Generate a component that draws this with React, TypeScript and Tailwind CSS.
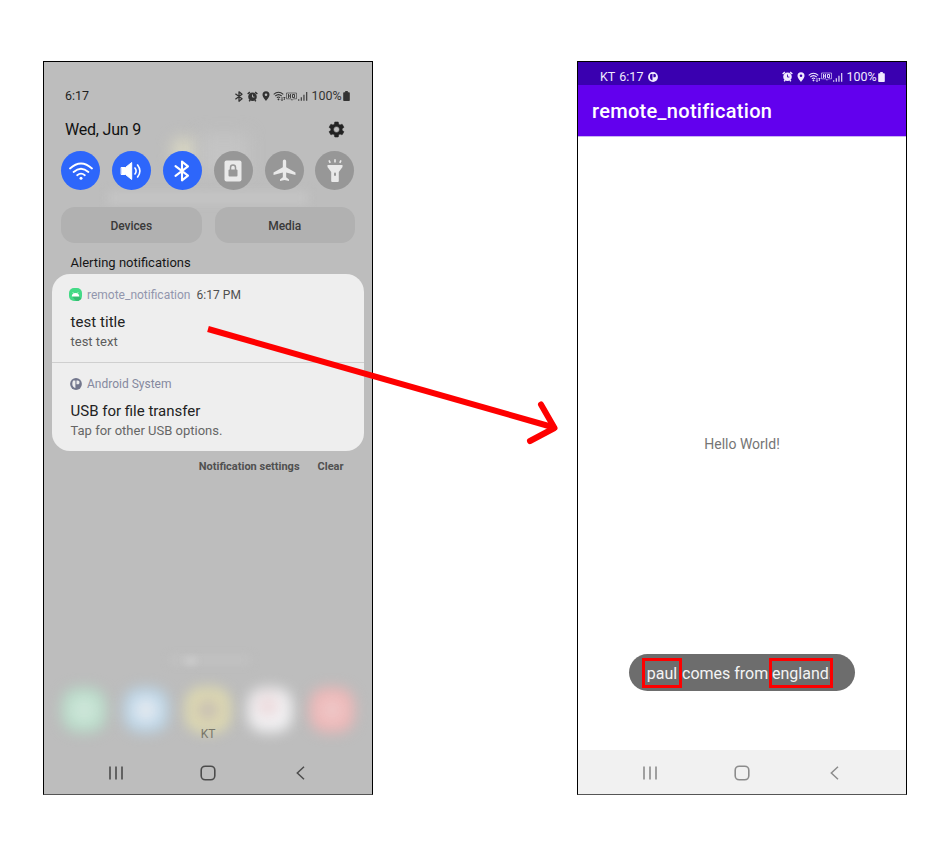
import React from "react";

type IconProps = { className?: string };

const BluetoothRune = ({ className }: IconProps) => (
  <svg viewBox="0 0 16 22" className={className} fill="none" stroke="currentColor" strokeWidth="2.1" strokeLinejoin="round" strokeLinecap="round">
    <path d="M1.5 6.2 14 15.6 8 20.4V1.6l6 4.8L1.5 15.8" />
  </svg>
);

const PlatformIcon = ({ className, hole }: IconProps & { hole: string }) => (
  <svg viewBox="0 0 12 12" className={className}>
    <circle cx="6" cy="6" r="5.9" fill="currentColor" />
    <path d="M3.200 2.500h2.200v7.500C3.400 9.600 2.300 8 2.300 6q0-2.300.9-3.500z M6.500 2.500h1.300c1 0 1.700.7 1.700 1.900s-.7 1.900-1.700 1.900H6.500z" fill={hole} />
  </svg>
);

const StatusIcons = ({ bluetooth, bg }: { bluetooth?: boolean; bg: string }) => (
  <div className="flex h-4 items-center">
    {bluetooth && <BluetoothRune className="mr-[4px] h-[11px] w-[8px] [&>path]:stroke-[2.6]" />}
    <svg viewBox="0 0 10 10" className="mr-[4px] h-[11px] w-[11px]">
      <circle cx="5" cy="5.300" r="3.900" fill="currentColor" />
      <path d="M.6 2.800 2.600 1M9.400 2.800 7.400 1M1.900 9.300l1-1M8.100 9.300l-1-1" stroke="currentColor" strokeWidth="1.300" />
      <path d="M5 3.200v2.300h1.700" stroke={bg} strokeWidth=".8" fill="none" />
    </svg>
    <svg viewBox="0 0 8 10" className="mr-[3px] h-[10px] w-[8px]">
      <path fillRule="evenodd" fill="currentColor" d="M4 .3a3.500 3.500 0 0 0-3.500 3.500C.5 6.200 4 9.900 4 9.900s3.500-3.700 3.500-6.100A3.500 3.500 0 0 0 4 .3zm0 2.200a1.300 1.300 0 1 1 0 2.600 1.300 1.300 0 0 1 0-2.600z" />
    </svg>
    <svg viewBox="0 0 13 10" className="h-[10px] w-[13px]" fill="none" stroke="currentColor">
      <path d="M.7 3.300Q5.500-.9 10.300 3.300M2.300 5Q5.500 2.200 8.700 5M3.900 6.700Q5.500 5.400 7.100 6.700" strokeWidth="1.100" />
      <path d="M5.500 7.300 6.600 8.400l-1.100 1-1.100-1z" fill="currentColor" stroke="none" />
      <path d="M9 6v3.600M8 8.500 9 9.600l1-1.100M11.400 9V6M10.500 7l.9-1 .9 1" strokeWidth=".8" />
    </svg>
    <svg viewBox="0 0 11 9" className="mr-px h-[9px] w-[11px]" fill="none" stroke="currentColor" strokeWidth="1">
      <path d="M.5 1h10v5.800h-3l-1.500 1.500-1-1.500H.5z" strokeWidth=".6" />
      <path d="M2.500 2v4M2.500 4h2M4.500 2v4M6.500 2.500v3h2v-3z" strokeWidth=".9" />
    </svg>
    <svg viewBox="0 0 10 10" className="mr-[4px] h-[10px] w-[10px]" fill="currentColor">
      <path d="M0 8.200h1.300v1.500H0zM2.700 6.300H4v3.400H2.700zM5.300 3.800h1.300v5.900H5.300zM8 1h1.300v8.700H8z" opacity=".85" />
    </svg>
    <span className="w-[30px] text-[12.5px] leading-4 whitespace-nowrap">100%</span>
    <svg viewBox="0 0 7 10" className="ml-[1.500px] h-[10px] w-[7px]" fill="currentColor">
      <path d="M2.200 0h2.600v1.200H6a.8.8 0 0 1 .8.800v7.200a.8.8 0 0 1-.8.800H1a.8.8 0 0 1-.8-.8V2a.8.8 0 0 1 .8-.8h1.200z" />
    </svg>
  </div>
);

const NavBar = ({ className }: IconProps) => (
  <div className={`flex h-[44px] items-center pt-px ${className}`}>
    <svg viewBox="0 0 14 14" className="ml-[65px] h-[14px] w-[14px]" fill="none" stroke="currentColor" strokeWidth="1.600">
      <path d="M1 .5v13M7 .5v13M13 .5v13" />
    </svg>
    <svg viewBox="0 0 16 16" className="ml-[77px] h-4 w-4" fill="none" stroke="currentColor" strokeWidth="1.600">
      <rect x="1.200" y="1.200" width="13.600" height="13.600" rx="4" />
    </svg>
    <svg viewBox="0 0 9 14" className="ml-[80px] h-[14px] w-[9px]" fill="none" stroke="currentColor" strokeWidth="1.500">
      <path d="M8 .7 1.300 7 8 13.300" />
    </svg>
  </div>
);

const Toggle = ({ on, children }: { on?: boolean; children: React.ReactNode }) => (
  <div className={`flex h-[39px] w-[39px] items-center justify-center rounded-full ${on ? "bg-[#2d66fb] text-white" : "bg-[#979797] text-[#e9e9e9]"}`}>
    {children}
  </div>
);

const LeftPhone = () => (
  <div className="relative isolate flex h-[734px] w-[330px] flex-col overflow-hidden border border-black border-b-[#555] bg-[#bdbdbd] text-[#1c1c1c]">
    {/* Blurred home screen behind the shade */}
    <div className="absolute inset-0 -z-10">
      <div className="absolute top-[76px] left-[128px] h-6 w-6 rounded-full bg-[#dcdac4] blur-[8px]" />
      <div className="absolute top-[72px] left-[156px] h-10 w-12 bg-[#c4c4c4] blur-[8px]" />
      <div className="absolute top-[130px] left-[64px] h-3 w-[200px] bg-[#c5c5c5] blur-[5px]" />
      <div className="absolute top-[594px] left-[126px] h-2 w-[80px] bg-[#c2c2c2] blur-[4px]" />
      <div className="absolute top-[595px] left-[141px] h-2 w-3 bg-[#cacaca] blur-[3px]" />
    </div>

    <div className="mt-[26px] flex h-4 items-center justify-between pr-[22px] pl-[21px] text-[#333]">
      <span className="pt-px text-[12.500px] text-[#1f1f1f]">6:17</span>
      <StatusIcons bluetooth bg="#bdbdbd" />
    </div>

    <div className="mt-[15px] flex h-5 items-center justify-between pr-[27px] pl-[21px]">
      <span className="pt-[2px] text-[16px] tracking-[-.2px] text-[#111]">Wed, Jun 9</span>
      <svg viewBox="0 0 24 24" className="h-[19px] w-[19px] -mr-px" fill="#222">
        <path stroke="#222" strokeWidth=".6" strokeLinejoin="round" d="M19.140 12.940c.040-.3.060-.61.060-.94s-.020-.64-.070-.94l2.030-1.580a.49.490 0 0 0 .12-.61l-1.920-3.320a.488.488 0 0 0-.59-.22l-2.390.96a7.030 7.030 0 0 0-1.620-.94l-.36-2.540a.484.484 0 0 0-.48-.41h-3.840a.47.470 0 0 0-.47.410l-.36 2.540c-.59.240-1.130.570-1.620.940l-2.390-.96a.47.470 0 0 0-.59.220L2.740 8.870a.47.470 0 0 0 .12.610l2.030 1.580c-.050.3-.090.630-.090.940s.020.640.070.940l-2.030 1.580a.49.490 0 0 0-.12.610l1.920 3.320c.12.220.370.290.590.220l2.390-.96c.5.380 1.030.7 1.620.940l.36 2.540c.050.240.240.410.480.410h3.840c.24 0 .440-.17.470-.41l.36-2.540c.59-.24 1.130-.56 1.620-.94l2.390.960c.220.080.470 0 .590-.22l1.920-3.320a.47.470 0 0 0-.12-.61zM12 15.700A3.700 3.700 0 1 1 12 8.300a3.700 3.700 0 0 1 0 7.400z" />
      </svg>
    </div>

    <div className="mt-[12px] ml-[17px] flex gap-[11.900px]">
      <Toggle on>
        <svg viewBox="0 0 24 18" className="h-[18px] w-6" fill="none" stroke="currentColor" strokeWidth="1.800" strokeLinecap="round">
          <path d="M1 6.500Q12-3.500 23 6.500M4.600 10Q12 3.400 19.400 10M8.200 13.200Q12 10 15.800 13.200" />
          <circle cx="12" cy="16.300" r="1.500" fill="currentColor" stroke="none" />
        </svg>
      </Toggle>
      <Toggle on>
        <svg viewBox="0 0 24 20" className="h-5 w-6" fill="none" stroke="currentColor" strokeWidth="1.600" strokeLinecap="round">
          <path d="M2.500 6.500h4L12.700 1.500v17L6.500 13.500h-4z" fill="currentColor" strokeWidth="1" strokeLinejoin="round" />
          <path d="M16 7q2.200 3 0 6M18.600 4q4.600 6 0 12" />
        </svg>
      </Toggle>
      <Toggle on>
        <BluetoothRune className="h-[22px] w-4" />
      </Toggle>
      <Toggle>
        <svg viewBox="0 0 18 22" className="h-[22px] w-[18px]">
          <rect x=".5" y=".5" width="17" height="21" rx="2" fill="currentColor" />
          <rect x="4.500" y="9.500" width="9" height="7" rx="1" fill="#979797" />
          <path d="M6.500 10V7.500a2.500 2.500 0 0 1 5 0V10" stroke="#979797" strokeWidth="1.500" fill="none" />
        </svg>
      </Toggle>
      <Toggle>
        <svg viewBox="0 0 22 22" className="h-[23px] w-[23px]" fill="currentColor">
          <path d="M11 .5c-1 0-1.600.9-1.600 2v5.400L.5 13v2.200l8.900-2.400v4.700l-2.700 2v1.600l4.300-1 4.300 1v-1.600l-2.700-2v-4.700l8.900 2.400V13l-8.900-5.100V2.500c0-1.100-.6-2-1.600-2z" />
        </svg>
      </Toggle>
      <Toggle>
        <svg viewBox="0 0 16 24" className="h-6 w-4">
          <path d="M2 1.300l1.200 2.500M8 .3v3.100M14 1.300l-1.200 2.500" stroke="currentColor" strokeWidth="1.600" />
          <path d="M.5 6h15v2L11.800 13v9a1 1 0 0 1-1 1H5.200a1 1 0 0 1-1-1v-9L.5 8z" fill="currentColor" />
          <rect x="7" y="13.500" width="2" height="3.500" rx="1" fill="#979797" />
        </svg>
      </Toggle>
    </div>

    <div className="mt-[17px] ml-[17px] flex gap-[13px] text-[12px] font-medium tracking-[-.05px] text-[#3a3a3a]">
      <div className="flex h-[36px] w-[140.500px] items-center justify-center rounded-[14px] bg-[#b1b1b1] pt-px">Devices</div>
      <div className="flex h-[36px] w-[140.500px] items-center justify-center rounded-[14px] bg-[#b1b1b1] pt-px">Media</div>
    </div>

    <div className="mt-[12px] h-4 pl-[26.500px] text-[13px] leading-4 text-[#161616]">Alerting notifications</div>

    <div className="mt-[2.500px] ml-2 h-[177px] w-[312px] rounded-[18px] bg-[#eee]">
      <div className="h-[89.500px] border-b border-[#cfcfcf] pt-[13px] pl-[18px]">
        <div className="flex h-4 items-center text-[12px]">
          <svg viewBox="0 0 13 13" className="-ml-px h-[13px] w-[13px]">
            <rect width="13" height="13" rx="5" fill="#43da86" />
            <path d="M3 8.300h7l2.500 2.500-3 2.200H7z" fill="#35bd72" />
            <path d="M2.800 8.500a3.700 3.500 0 0 1 7.400 0z" fill="#fff" />
            <path d="M3.800 4.200l1 1.500M9.200 4.200l-1 1.500" stroke="#fff" strokeWidth=".6" />
          </svg>
          <span className="ml-[5px] text-[#9296ad]">remote_notification</span>
          <span className="ml-[6px] tracking-[.05px] text-[#505050]">6:17 PM</span>
        </div>
        <div className="mt-[9px] h-5 pl-[.5px] text-[15px] leading-5 tracking-[.05px] text-[#222]">test title</div>
        <div className="mt-[2px] h-4 pl-[.5px] text-[13px] leading-4 text-[#5c5c5c]">test text</div>
      </div>
      <div className="pt-[13px] pl-[18px]">
        <div className="flex h-4 items-center text-[12px] text-[#72768c]">
          <PlatformIcon className="h-[12px] w-[12px]" hole="#eee" />
          <span className="ml-[5px] text-[#85899e]">Android System</span>
        </div>
        <div className="mt-[9px] h-5 pl-[.5px] text-[15px] leading-5 text-[#222]">USB for file transfer</div>
        <div className="mt-[2px] h-4 pl-[.5px] text-[13px] leading-4 text-[#666]">Tap for other USB options.</div>
      </div>
    </div>

    <div className="mt-[8.500px] flex h-4 justify-end gap-[18px] pr-[28.500px] text-[11px] leading-4 font-bold text-[#505050]">
      <span>Notification settings</span>
      <span>Clear</span>
    </div>

    <div className="mt-auto flex h-[44px] gap-[18px] pl-[18px]">
      <div className="h-[44px] w-[44px] rounded-[16px] bg-[radial-gradient(#cfe6da_20%,#b5dcc7_70%)] blur-[7px]" />
      <div className="h-[44px] w-[44px] rounded-[16px] bg-[radial-gradient(#e6eaf0_20%,#b9d6ea_60%)] blur-[7px]" />
      <div className="h-[44px] w-[44px] rounded-[16px] bg-[radial-gradient(#c8c0b4_25%,#e4dfae_55%)] blur-[7px]" />
      <div className="h-[44px] w-[44px] rounded-[16px] bg-[radial-gradient(at_45%_40%,#ecd6d8_12%,#f2f2f4_45%)] blur-[7px]" />
      <div className="h-[44px] w-[44px] rounded-[16px] bg-[radial-gradient(#eccaca_15%,#f1b6b6_55%)] blur-[7px]" />
    </div>
    <div className="relative -mt-[6px] h-4 text-center text-[12px] leading-4 text-[#77766a]">KT</div>
    <NavBar className="mt-[8px] text-[#4c4c4c]" />
  </div>
);

const RightPhone = () => (
  <div className="flex h-[734px] w-[330px] flex-col border border-black border-b-[#555] bg-white">
    <div className="flex h-[23px] items-center justify-between bg-[#3a00b0] pt-[6px] pr-[21px] pl-[22px] text-[#f0eaff]">
      <div className="flex items-center text-[12.500px] leading-4">
        <span>KT</span>
        <span className="ml-[4px]">6:17</span>
        <PlatformIcon className="ml-[5px] h-[10px] w-[10px]" hole="#3a00b0" />
      </div>
      <StatusIcons bg="#3a00b0" />
    </div>
    <div className="flex h-[52px] items-center border-b border-[#c9b4f2] bg-[#6200ee] pl-[14px] text-[20px] font-medium tracking-[.3px] text-white">remote_notification</div>
    <div className="flex h-[613px] flex-col items-center">
      <div className="mt-[299px] h-4 text-[14px] leading-4 text-[#757575]">Hello World!</div>
      <div className="mt-[202px] flex h-[37px] w-[226px] items-center rounded-full bg-[#6d6d6d] pl-[13px] text-[16px] leading-5 whitespace-pre text-[#f4f4f4]">
        <span className="flex h-[30px] w-[40px] items-center justify-center border-[3px] border-[#fe0000] pt-[2px]">paul</span>
        <span className="w-[86px] pt-[2px] text-center">comes from</span>
        <span className="ml-px flex h-[30px] w-[64px] items-center overflow-hidden border-[3px] border-[#fe0000] pt-[2px]">england.</span>
      </div>
    </div>
    <NavBar className="bg-[#f1f1f1] text-[#8c8c8c]" />
  </div>
);

export default function App() {
  return (
    <div className="relative flex h-[842px] w-[951px] gap-[204px] overflow-hidden bg-white pt-[61px] pl-[43px] font-[Roboto,sans-serif]">
      <LeftPhone />
      <RightPhone />
      <svg viewBox="0 0 951 842" className="pointer-events-none absolute inset-0 h-[842px] w-[951px]" fill="none" stroke="#fe0000" strokeWidth="6">
        <path d="M208 329 554 427.500" />
        <path d="M541 404.500 554.500 428 530 441" strokeLinecap="round" strokeLinejoin="round" />
      </svg>
    </div>
  );
}
